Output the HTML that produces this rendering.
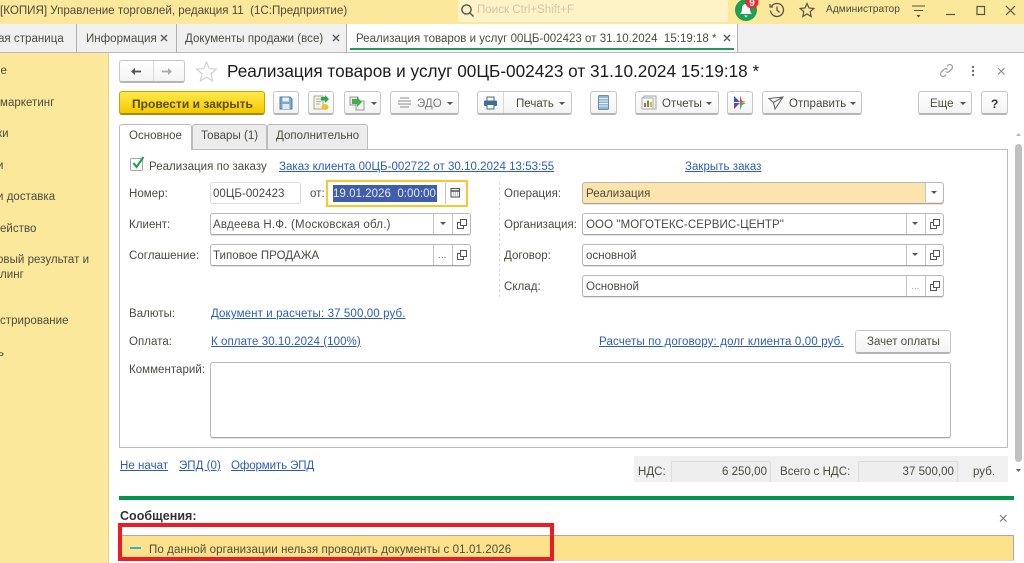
<!DOCTYPE html>
<html lang="ru"><head><meta charset="utf-8"><title>1С</title>
<style>
html,body{margin:0;padding:0;width:1024px;height:563px;overflow:hidden;background:#fff}
body{position:relative;font-family:"Liberation Sans",sans-serif;font-size:11.5px;color:#4b4b40;letter-spacing:.035px}
#w{position:absolute;left:0;top:0;width:1024px;height:563px;overflow:hidden;filter:blur(.3px)}
.a,.t,.b,.f,svg{position:absolute}
.t{white-space:pre;line-height:16px;height:16px}
.l{color:#2a5cc0;text-decoration:underline}
.b{box-sizing:border-box;height:24px;top:91px;border:1px solid #c6c6c6;border-bottom:2px solid #b5b5b5;border-radius:3px;background:linear-gradient(#fff,#f3f3f3)}
.f{box-sizing:border-box;height:22px;border:1px solid #b8b8b8;border-bottom:1px solid #a4a4a4;box-shadow:0 1px 0 #e4e4e4;border-radius:3px;background:#fff}
.v{position:absolute;width:1px;background:#c4c4c4}
.x{position:absolute;width:0;height:0;border-left:3px solid transparent;border-right:3px solid transparent;border-top:3px solid #555}
</style></head><body><div id="w">

<!-- title bar -->
<div class="a" style="left:0;top:0;width:1024px;height:24px;background:#fbe89b"></div>
<div class="t" style="left:0;top:3px;font-size:11.6px;letter-spacing:-.01px">[КОПИЯ] Управление торговлей, редакция 11  (1С:Предприятие)</div>
<div class="a" style="left:458px;top:0;width:270px;height:22px;background:#fdf3c6;border-radius:2px"></div>
<svg style="left:460px;top:3px" width="15" height="15" viewBox="0 0 15 15" fill="none" stroke="#555" stroke-width="1.4"><circle cx="6.5" cy="6.5" r="4.6"/><path d="M10 10l3.5 3.5"/></svg>
<div class="t" style="left:477px;top:2px;color:#cfc8a8;font-size:11.5px">Поиск Ctrl+Shift+F</div>
<svg style="left:734px;top:0" width="30" height="22" viewBox="0 0 30 22"><circle cx="12" cy="10" r="11" fill="#1f9f52"/><path d="M12 4c-3 0-4 2-4 5 0 3-1 4-2 5h12c-1-1-2-2-2-5 0-3-1-5-4-5z" fill="#fff"/><path d="M10 15.500h4l-2 2z" fill="#fff"/><circle cx="18" cy="2" r="6.500" fill="#ee2a30"/><text x="18" y="6" text-anchor="middle" font-family="Liberation Sans" font-weight="700" font-size="10" fill="#fff">9</text></svg>
<svg style="left:769px;top:2px" width="16" height="16" viewBox="0 0 16 16" fill="none" stroke="#55524a" stroke-width="1.300"><path d="M2.500 4.500A6.500 6.500 0 1 1 1.500 8.500"/><path d="M1 2v3h3M8 4.500V8l2.500 2.500"/></svg>
<svg style="left:799px;top:2px" width="16" height="16" viewBox="0 0 16 16" fill="none" stroke="#55524a" stroke-width="1.200"><path d="M8 1.500l2 4.500 4.800.5-3.600 3.200 1 4.800L8 12l-4.200 2.500 1-4.800L1.200 6.500 6 6z"/></svg>
<div class="t" style="left:826px;top:2px;font-size:10.2px">Администратор</div>
<svg style="left:911px;top:4px" width="16" height="14" viewBox="0 0 16 14" fill="none" stroke="#55524a" stroke-width="1.100"><path d="M1 2h13M3 6.500h9"/><path d="M5.500 11h4l-2 2.500z" fill="#55524a" stroke="none"/></svg>
<svg style="left:944px;top:4px" width="76" height="14" viewBox="0 0 76 14" fill="none" stroke="#55524a" stroke-width="1.200"><path d="M2 10.500h9"/><rect x="33" y="2.500" width="7.500" height="8"/><path d="M62 2l9 9M71 2l-9 9"/></svg>

<!-- tabs -->
<div class="a" style="left:0;top:24px;width:1024px;height:29px;background:#f0f0f0;border-bottom:1px solid #b9b9b9;box-sizing:border-box"></div>
<div class="a" style="left:347px;top:24px;width:390px;height:29px;background:#fff;border-bottom:1px solid #b9b9b9;box-sizing:border-box"></div>
<div class="a" style="left:350px;top:48px;width:384px;height:2px;background:#1d9c55"></div>
<div class="v" style="left:76px;top:24px;height:29px;background:#b0b0b0"></div>
<div class="v" style="left:176px;top:24px;height:29px;background:#b0b0b0"></div>
<div class="v" style="left:346px;top:24px;height:29px;background:#b0b0b0"></div>
<div class="v" style="left:737px;top:24px;height:29px;background:#b0b0b0"></div>
<div class="t" style="left:-2px;top:31px">ая страница</div>
<div class="t" style="left:86px;top:31px">Информация</div>
<div class="t" style="left:185px;top:31px">Документы продажи (все)</div>
<div class="t" style="left:356px;top:31px;letter-spacing:.02px">Реализация товаров и услуг 00ЦБ-002423 от 31.10.2024  15:19:18 *</div>
<svg style="left:160px;top:34px" width="580" height="9" viewBox="0 0 580 9" fill="none" stroke="#555" stroke-width="1.400"><path d="M1 1l6 6M7 1l-6 6M173 1l6 6M179 1l-6 6M564 1l6 6M570 1l-6 6"/></svg>

<!-- sidebar -->
<div class="a" style="left:0;top:53px;width:108px;height:510px;background:#fbe89b;border-right:1px solid #e6d48a"></div>
<div class="t" style="left:-6px;top:63px">ие</div>
<div class="t" style="left:0;top:95px">маркетинг</div>
<div class="t" style="left:-3px;top:126px">ки</div>
<div class="t" style="left:-3px;top:158px">и</div>
<div class="t" style="left:-3px;top:189px">и доставка</div>
<div class="t" style="left:0;top:221px">ейство</div>
<div class="t" style="left:-3px;top:252px">овый результат и</div>
<div class="t" style="left:0;top:267px">линг</div>
<div class="t" style="left:0;top:313px">стрирование</div>
<div class="t" style="left:-2px;top:345px">ь</div>

<!-- doc header -->
<div class="b" style="left:119px;top:60px;width:66px;height:23px"></div>
<div class="v" style="left:153px;top:61px;height:20px;background:#d8d8d8"></div>
<svg style="left:128px;top:66px" width="50" height="11" viewBox="0 0 50 11"><path d="M13 5.500H6" stroke="#555" stroke-width="1.800"/><path d="M7 2L3 5.500 7 9z" fill="#555"/><path d="M34 5.500h7" stroke="#aaa" stroke-width="1.800"/><path d="M40 2l4 3.500-4 3.500z" fill="#aaa"/></svg>
<svg style="left:195px;top:60px" width="23" height="22" viewBox="0 0 23 22" fill="none" stroke="#d0d0d0" stroke-width="1.200"><path d="M11.500 2l2.800 6.600 7 .6-5.300 4.700 1.600 7-6.100-3.700-6.100 3.700 1.600-7L1.700 9.200l7-.6z"/></svg>
<div class="t" style="left:227px;top:61px;height:20px;line-height:20px;font-size:17.2px;letter-spacing:0;color:#1c1c1c">Реализация товаров и услуг 00ЦБ-002423 от 31.10.2024 15:19:18 *</div>
<svg style="left:939px;top:63px" width="15" height="15" viewBox="0 0 15 15" fill="none" stroke="#a0a0a0" stroke-width="1.300"><path d="M6.500 8.500a2.500 2.500 0 0 0 3.700 0l2.500-2.500a2.600 2.600 0 0 0-3.700-3.700L8 3.300M8.500 6.500a2.500 2.500 0 0 0-3.700 0L2.300 9a2.600 2.600 0 0 0 3.700 3.700l1-1"/></svg>
<svg style="left:971px;top:65px" width="4" height="12" viewBox="0 0 4 12" fill="#707070"><circle cx="2" cy="2" r="1.200"/><circle cx="2" cy="6" r="1.200"/><circle cx="2" cy="10" r="1.200"/></svg>
<svg style="left:997px;top:67px" width="9" height="9" viewBox="0 0 9 9" stroke="#8a8a8a" stroke-width="1.100"><path d="M1 1l6.500 6.500M7.500 1L1 7.500"/></svg>

<!-- toolbar -->
<div class="b" style="left:119px;width:146px;background:linear-gradient(#ffe94d,#f5c800);border-color:#c9a500;border-bottom-color:#a98c00"></div>
<div class="t" style="left:132px;top:96px;font-weight:700;color:#5a4e00;font-size:12px">Провести и закрыть</div>
<div class="b" style="left:273px;width:26px"></div>
<svg style="left:279px;top:96px" width="14" height="14" viewBox="0 0 14 14"><path d="M1 1h10l2 2v10H1z" fill="#7da6cf" stroke="#4f7fae"/><rect x="3.500" y="1.500" width="6.500" height="4" fill="#e9f1f8"/><rect x="3.500" y="8" width="7" height="5" fill="#dfe9f3"/></svg>
<div class="b" style="left:308px;width:26px"></div>
<svg style="left:313px;top:95px" width="17" height="16" viewBox="0 0 17 16"><path d="M1 1h9v13H1z" fill="#f3f3e8" stroke="#a8a890"/><path d="M3 4h5M3 6.500h5M3 9h4" stroke="#999" stroke-width=".8"/><path d="M8 2h4V0l4 4-4 4V5.500H8z" fill="#22a84f"/><ellipse cx="12" cy="12" rx="3.500" ry="3" fill="#ecc22e"/></svg>
<div class="b" style="left:344px;width:37px"></div>
<svg style="left:349px;top:96px" width="17" height="15" viewBox="0 0 17 15"><rect x="1" y="1" width="8" height="8" fill="#e9e9e9" stroke="#9a9a9a"/><rect x="7" y="5" width="8" height="9" fill="#f4f4f4" stroke="#9a9a9a"/><path d="M3 3l5 0 0-2 5 5-5 5V8H3z" fill="#41b04a"/></svg>
<div class="x" style="left:371px;top:102px"></div>
<div class="b" style="left:390px;width:69px"></div>
<svg style="left:396px;top:96px" width="17" height="14" viewBox="0 0 17 14" fill="none" stroke="#a3a3a3" stroke-width="1.200"><path d="M4 2h9M2 5h13M2 8h13M4 11h9"/></svg>
<div class="t" style="left:417px;top:96px;color:#7a7a7a">ЭДО</div>
<div class="x" style="left:447px;top:102px"></div>
<div class="b" style="left:477px;width:95px"></div>
<div class="v" style="left:503px;top:92px;height:21px;background:#d8d8d8"></div>
<svg style="left:483px;top:96px" width="15" height="14" viewBox="0 0 15 14"><rect x="4" y="1" width="7" height="4" fill="#fff" stroke="#4a6d8e"/><rect x="1" y="4.500" width="13" height="5.500" rx="1" fill="#3e6e96"/><rect x="4" y="8.500" width="7" height="4.500" fill="#fff" stroke="#4a6d8e"/></svg>
<div class="t" style="left:516px;top:96px">Печать</div>
<div class="x" style="left:559px;top:102px"></div>
<div class="b" style="left:590px;width:27px"></div>
<svg style="left:598px;top:95px" width="11" height="15" viewBox="0 0 11 15"><rect x=".5" y=".5" width="10" height="14" rx="1" fill="#8fb4d4" stroke="#6d8fad"/><path d="M1 3.500h9M1 6h9M1 8.500h9M1 11h9" stroke="#e4eef6"/></svg>
<div class="b" style="left:635px;width:84px"></div>
<svg style="left:641px;top:95px" width="16" height="15" viewBox="0 0 16 15"><rect x="3" y="1" width="12" height="13" fill="#f2f2f2" stroke="#a5a5a5"/><rect x="1" y="3" width="11" height="11" fill="#fff" stroke="#a5a5a5"/><rect x="3" y="8" width="2" height="4" fill="#e0503e"/><rect x="6" y="5.500" width="2" height="6.500" fill="#3aa850"/><rect x="9" y="7" width="2" height="5" fill="#e7b52c"/></svg>
<div class="t" style="left:662px;top:96px">Отчеты</div>
<div class="x" style="left:706px;top:102px"></div>
<div class="b" style="left:727px;width:26px"></div>
<svg style="left:733px;top:95px" width="14" height="15" viewBox="0 0 14 15"><path d="M1 1l6 6-6 0z" fill="#3456c8"/><path d="M7 0l2 6 4 1-6 1z" fill="#e8413a"/><path d="M1 8h6l-6 6z" fill="#7b3cc2"/><path d="M7 8l6 0-4 2-2 5z" fill="#2fb25a"/></svg>
<div class="b" style="left:762px;width:100px"></div>
<svg style="left:768px;top:96px" width="16" height="14" viewBox="0 0 16 14" fill="none" stroke="#666" stroke-width="1.100"><path d="M1 2.500L15 1 7 13 5.500 6.500zM5.500 6.500L15 1"/></svg>
<div class="t" style="left:789px;top:96px">Отправить</div>
<div class="x" style="left:850px;top:102px"></div>
<div class="b" style="left:918px;width:54px"></div>
<div class="t" style="left:930px;top:96px">Еще</div>
<div class="x" style="left:960px;top:102px"></div>
<div class="b" style="left:981px;width:27px"></div>
<div class="t" style="left:991px;top:96px;font-weight:700;font-size:12px;color:#333">?</div>

<!-- form tabs & panel -->
<div class="a" style="left:119px;top:149px;width:889px;height:299px;box-sizing:border-box;border:1px solid #bcbcbc;background:#fff"></div>
<div class="a" style="left:192px;top:124px;width:75px;height:25px;box-sizing:border-box;background:#ececec;border:1px solid #bcbcbc;border-bottom:0;border-radius:3px 3px 0 0"></div>
<div class="a" style="left:267px;top:124px;width:101px;height:25px;box-sizing:border-box;background:#ececec;border:1px solid #bcbcbc;border-bottom:0;border-radius:3px 3px 0 0"></div>
<div class="a" style="left:119px;top:124px;width:73px;height:26px;box-sizing:border-box;background:#fff;border:1px solid #bcbcbc;border-bottom:0;border-radius:3px 3px 0 0"></div>
<div class="t" style="left:129px;top:128px">Основное</div>
<div class="t" style="left:201px;top:128px">Товары (1)</div>
<div class="t" style="left:276px;top:128px">Дополнительно</div>

<div class="a" style="left:130px;top:158px;width:13px;height:13px;box-sizing:border-box;border:1px solid #a8a8a8;border-radius:2px;background:#fff"></div>
<svg style="left:131px;top:155px" width="15" height="15" viewBox="0 0 15 15" fill="none" stroke="#1e9e50" stroke-width="2"><path d="M2.500 8l3 4 7-10"/></svg>
<div class="t" style="left:149px;top:159px">Реализация по заказу</div>
<div class="t l" style="left:279px;top:159px">Заказ клиента 00ЦБ-002722 от 30.10.2024 13:53:55</div>
<div class="t l" style="left:685px;top:159px">Закрыть заказ</div>

<div class="t" style="left:129px;top:186px">Номер:</div>
<div class="f" style="left:210px;top:182px;width:91px;border-color:#dcdcdc;border-bottom:1px solid #dcdcdc;box-shadow:none"></div>
<div class="t" style="left:213px;top:186px">00ЦБ-002423</div>
<div class="t" style="left:310px;top:186px">от:</div>
<div class="a" style="left:326px;top:180px;width:142px;height:27px;box-sizing:border-box;border:2px solid #fbc72e;background:#fff"></div>
<div class="a" style="left:333px;top:185px;width:104px;height:17px;background:#3f5dab"></div>
<div class="t" style="left:333px;top:186px;color:#e8ecf8">19.01.2026  0:00:00</div>
<div class="v" style="left:445px;top:183px;height:21px"></div>
<svg style="left:450px;top:187px" width="11" height="11" viewBox="0 0 11 11" fill="none" stroke="#555" stroke-width="1.100"><rect x="1" y="1.500" width="8.500" height="8.500"/><path d="M1 4h8.500" stroke-width="1.600"/><path d="M3 6h1M5 6h1M7 6h1M3 8h1M5 8h1M7 8h1" stroke-width=".8"/></svg>

<div class="t" style="left:129px;top:217px">Клиент:</div>
<div class="f" style="left:210px;top:213px;width:261px"></div>
<div class="t" style="left:213px;top:217px;letter-spacing:.2px">Авдеева Н.Ф. (Московская обл.)</div>
<div class="v" style="left:433px;top:214px;height:20px"></div><div class="v" style="left:452px;top:214px;height:20px"></div>
<div class="x" style="left:440px;top:222px"></div>
<svg class="ic" style="left:457px;top:219px" width="10" height="10" viewBox="0 0 10 10" fill="none" stroke="#555"><rect x="3.500" y=".5" width="6" height="6"/><path d="M3.500 3.500H.5v6h6V6.500"/></svg>

<div class="t" style="left:129px;top:248px">Соглашение:</div>
<div class="f" style="left:210px;top:244px;width:261px"></div>
<div class="t" style="left:213px;top:248px">Типовое ПРОДАЖА</div>
<div class="v" style="left:433px;top:245px;height:20px"></div><div class="v" style="left:452px;top:245px;height:20px"></div>
<div class="t" style="left:438px;top:248px;color:#777;font-size:10px">...</div>
<svg style="left:457px;top:250px" width="10" height="10" viewBox="0 0 10 10" fill="none" stroke="#555"><rect x="3.500" y=".5" width="6" height="6"/><path d="M3.500 3.500H.5v6h6V6.500"/></svg>

<div class="a" style="left:499px;top:182px;height:115px;width:0;border-left:1px dashed #d8d8d8"></div>

<div class="t" style="left:504px;top:186px">Операция:</div>
<div class="f" style="left:582px;top:182px;width:362px;background:#fde3ac"></div>
<div class="a" style="left:925px;top:183px;width:18px;height:19px;background:#fff;border-radius:0 3px 3px 0;border-left:1px solid #c4c4c4;box-sizing:border-box"></div>
<div class="t" style="left:586px;top:186px">Реализация</div>
<div class="x" style="left:931px;top:191px"></div>

<div class="t" style="left:504px;top:217px">Организация:</div>
<div class="f" style="left:582px;top:213px;width:362px"></div>
<div class="t" style="left:586px;top:217px;letter-spacing:.09px">ООО "МОГОТЕКС-СЕРВИС-ЦЕНТР"</div>
<div class="v" style="left:906px;top:214px;height:20px"></div><div class="v" style="left:925px;top:214px;height:20px"></div>
<div class="x" style="left:912px;top:222px"></div>
<svg style="left:930px;top:219px" width="10" height="10" viewBox="0 0 10 10" fill="none" stroke="#555"><rect x="3.500" y=".5" width="6" height="6"/><path d="M3.500 3.500H.5v6h6V6.500"/></svg>

<div class="t" style="left:504px;top:248px">Договор:</div>
<div class="f" style="left:582px;top:244px;width:362px"></div>
<div class="t" style="left:586px;top:248px">основной</div>
<div class="v" style="left:906px;top:245px;height:20px"></div><div class="v" style="left:925px;top:245px;height:20px"></div>
<div class="x" style="left:912px;top:253px"></div>
<svg style="left:930px;top:250px" width="10" height="10" viewBox="0 0 10 10" fill="none" stroke="#555"><rect x="3.500" y=".5" width="6" height="6"/><path d="M3.500 3.500H.5v6h6V6.500"/></svg>

<div class="t" style="left:504px;top:279px">Склад:</div>
<div class="f" style="left:582px;top:275px;width:362px"></div>
<div class="t" style="left:586px;top:279px">Основной</div>
<div class="v" style="left:906px;top:276px;height:20px"></div><div class="v" style="left:925px;top:276px;height:20px"></div>
<div class="t" style="left:911px;top:279px;color:#999;font-size:10px">...</div>
<svg style="left:930px;top:281px" width="10" height="10" viewBox="0 0 10 10" fill="none" stroke="#555"><rect x="3.500" y=".5" width="6" height="6"/><path d="M3.500 3.500H.5v6h6V6.500"/></svg>

<div class="t" style="left:129px;top:306px">Валюты:</div>
<div class="t l" style="left:211px;top:306px;letter-spacing:.12px">Документ и расчеты: 37 500,00 руб.</div>
<div class="t" style="left:129px;top:334px">Оплата:</div>
<div class="t l" style="left:211px;top:334px;letter-spacing:.07px">К оплате 30.10.2024 (100%)</div>
<div class="t l" style="left:599px;top:334px;letter-spacing:.15px">Расчеты по договору: долг клиента 0,00 руб.</div>
<div class="b" style="left:855px;top:330px;width:96px"></div>
<div class="t" style="left:867px;top:334px">Зачет оплаты</div>
<div class="t" style="left:129px;top:362px">Комментарий:</div>
<div class="f" style="left:210px;top:362px;width:741px;height:76px"></div>

<!-- scrollbar -->
<svg style="left:1014px;top:128px" width="9" height="350" viewBox="0 0 9 350"><path d="M2 8l2.500-3L7 8z" fill="#bbb"/><rect x="1" y="16" width="7" height="318" rx="3.500" fill="#c0c0c0"/><path d="M2 341l2.500 3 2.500-3z" fill="#666"/></svg>

<!-- bottom -->
<div class="t l" style="left:120px;top:458px">Не начат</div>
<div class="t l" style="left:179px;top:458px">ЭПД (0)</div>
<div class="t l" style="left:231px;top:458px;letter-spacing:-.1px">Оформить ЭПД</div>
<div class="a" style="left:634px;top:456px;width:374px;height:26px;background:#f0f0f0"></div>
<div class="t" style="left:638px;top:464px">НДС:</div>
<div class="a" style="left:671px;top:461px;width:100px;height:21px;box-sizing:border-box;border:1px solid #dcdcdc;border-bottom:0;border-radius:2px 2px 0 0;background:#eee"></div>
<div class="t" style="left:671px;width:96px;text-align:right;top:464px">6 250,00</div>
<div class="t" style="left:780px;top:464px">Всего с НДС:</div>
<div class="a" style="left:858px;top:461px;width:100px;height:21px;box-sizing:border-box;border:1px solid #dcdcdc;border-bottom:0;border-radius:2px 2px 0 0;background:#eee"></div>
<div class="t" style="left:858px;width:96px;text-align:right;top:464px">37 500,00</div>
<div class="t" style="left:973px;top:464px">руб.</div>
<div class="a" style="left:119px;top:496px;width:895px;height:4px;background:#00974a"></div>
<div class="t" style="left:120px;top:508px;font-weight:700;color:#333;font-size:12.5px">Сообщения:</div>
<svg style="left:999px;top:514px" width="9" height="9" viewBox="0 0 9 9" stroke="#777" stroke-width="1.100"><path d="M1 1l6.500 6.500M7.500 1L1 7.500"/></svg>
<div class="a" style="left:119px;top:535px;width:895px;height:25px;box-sizing:border-box;background:#fde28b;border-top:1px solid #aaa;border-right:1px solid #aaa"></div>
<div class="a" style="left:119px;top:560px;width:895px;height:3px;background:#fff;border-top:1px solid #ddd;box-sizing:border-box"></div>
<div class="a" style="left:130px;top:547px;width:11px;height:2px;background:#2db1e0"></div>
<div class="t" style="left:149px;top:542px;letter-spacing:.1px">По данной организации нельзя проводить документы с 01.01.2026</div>
<div class="a" style="left:118px;top:523px;width:436px;height:38px;box-sizing:border-box;border:4px solid #ed1c24"></div>
</div></body></html>
